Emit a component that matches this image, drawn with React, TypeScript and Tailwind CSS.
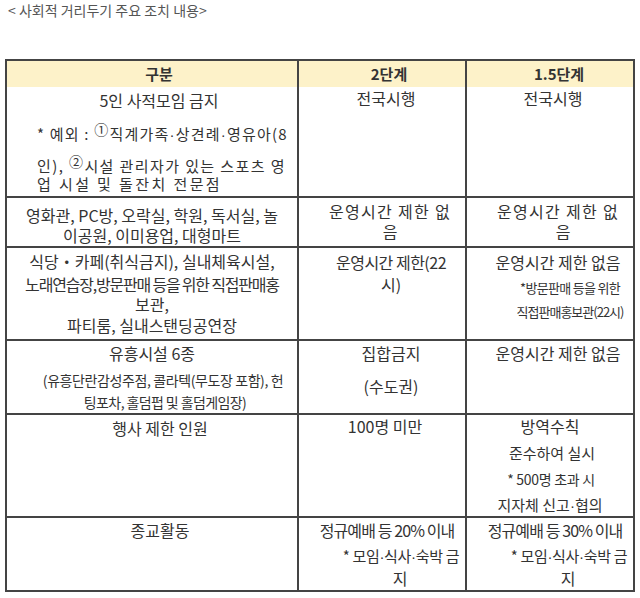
import type { ReactNode } from "react"

// one centred line of a cell; c holds height / size / offset classes
function L({ c, children }: { c: string; children: ReactNode }) {
  return <div className={`whitespace-nowrap text-center ${c}`}>{children}</div>
}

function Circ({ children }: { children: ReactNode }) {
  return <span className="relative -top-[5px] text-[14px]">{children}</span>
}

// narrow middle dot (the CJK one is full width)
function D() {
  return <span className="font-['Liberation_Sans',sans-serif]">·</span>
}

export default function App() {
  return (
    <div className="h-[598px] w-[640px] overflow-hidden bg-white font-['Noto_Sans_CJK_KR',sans-serif] text-[#333]">
      <div className="h-[20px] pl-[8px] text-[14px] leading-[20px] text-[#555]">
        &lt; 사회적 거리두기 주요 조치 내용&gt;
      </div>

      <div className="ml-[5px] mt-[39px] w-[630px] border-2 border-[#444]">
        {/* header */}
        <div className="grid h-[26px] grid-cols-[290px_168px_168px] bg-[#fdf2c9] text-[15px] font-bold leading-[26px]">
          <L c="pl-[14px]">구분</L>
          <div className="border-l-2 border-[#444]">
            <L c="pl-[14px]">2단계</L>
          </div>
          <div className="border-l-2 border-[#444]">
            <L c="pl-[18px]">1.5단계</L>
          </div>
        </div>

        {/* 5인 사적모임 금지 */}
        <div className="grid h-[109px] grid-cols-[290px_168px_168px]">
          <div>
            <L c="h-[26px] text-[16px] leading-[26px] pl-[14px]">5인 사적모임 금지</L>
            <div className="h-[42px] whitespace-nowrap pl-[30px] text-[15px] leading-[42px] tracking-[1.2px]">
              * 예외 : <Circ>①</Circ>직계가족<D />상견례<D />영유아(8
            </div>
            <div className="h-[22px] whitespace-nowrap pl-[30px] text-[15px] leading-[22px] tracking-[1.4px]">
              인), <Circ>②</Circ>시설 관리자가 있는 스포츠 영
            </div>
            <div className="h-[14px] whitespace-nowrap pl-[30px] text-[15px] leading-[14px] tracking-[2.4px]">
              업 시설 및 돌잔치 전문점
            </div>
          </div>
          <div className="border-l-2 border-[#444]">
            <L c="h-[23px] text-[16px] leading-[23px] pl-[8px]">전국시행</L>
          </div>
          <div className="border-l-2 border-[#444]">
            <L c="h-[23px] text-[16px] leading-[23px] pl-[6px]">전국시행</L>
          </div>
        </div>

        {/* 영화관 등 */}
        <div className="grid h-[50px] grid-cols-[290px_168px_168px] border-t-2 border-[#444] text-[16px]">
          <div className="pt-[7px]">
            <L c="h-[20px] leading-[20px]">영화관, PC방, 오락실, 학원, 독서실, 놀</L>
            <L c="h-[20px] leading-[20px]">이공원, 이미용업, 대형마트</L>
          </div>
          <div className="border-l-2 border-[#444] pt-[3px]">
            <L c="h-[20px] leading-[20px] pl-[16px] tracking-[1.3px]">운영시간 제한 없</L>
            <L c="h-[20px] leading-[20px] pl-[16px]">음</L>
          </div>
          <div className="border-l-2 border-[#444] pt-[3px]">
            <L c="h-[20px] leading-[20px] pl-[16px] tracking-[1.3px]">운영시간 제한 없</L>
            <L c="h-[20px] leading-[20px] pl-[26px]">음</L>
          </div>
        </div>

        {/* 식당·카페 등 */}
        <div className="grid h-[93px] grid-cols-[290px_168px_168px] border-t-2 border-[#444] text-[16px]">
          <div className="pt-[1px]">
            <L c="h-[24px] leading-[24px]">식당・카페(취식금지), 실내체육시설,</L>
            <L c="h-[22px] leading-[22px] tracking-[-1.2px]">노래연습장,방문판매 등을 위한 직접판매홍</L>
            <L c="h-[18px] leading-[18px]">보관,</L>
            <L c="h-[24px] leading-[24px]">파티룸, 실내스탠딩공연장</L>
          </div>
          <div className="border-l-2 border-[#444] pt-[3px]">
            <L c="h-[22px] leading-[22px] pl-[18px] tracking-[-0.5px]">운영시간 제한(22</L>
            <L c="h-[22px] leading-[22px] pl-[18px]">시)</L>
          </div>
          <div className="border-l-2 border-[#444] pt-[3px]">
            <L c="h-[22px] leading-[22px] pl-[16px]">운영시간 제한 없음</L>
            <L c="h-[30px] text-[13px] leading-[30px] pl-[40px] tracking-[-0.7px]">*방문판매 등을 위한</L>
            <L c="h-[18px] text-[13px] leading-[18px] pl-[40px] tracking-[-1px]">직접판매홍보관(22시)</L>
          </div>
        </div>

        {/* 유흥시설 */}
        <div className="grid h-[74px] grid-cols-[290px_168px_168px] border-t-2 border-[#444] text-[16px]">
          <div className="pt-[1px]">
            <L c="h-[22px] leading-[22px]">유흥시설 6종</L>
            <L c="h-[32px] text-[14px] leading-[32px] pl-[22px] tracking-[-0.4px]">
              (유흥단란감성주점, 콜라텍(무도장 포함), 헌
            </L>
            <L c="h-[12px] text-[14px] leading-[12px] pl-[26px] tracking-[-0.6px]">
              팅포차, 홀덤펍 및 홀덤게임장)
            </L>
          </div>
          <div className="border-l-2 border-[#444] pt-[1px]">
            <L c="h-[22px] leading-[22px] pl-[18px]">집합금지</L>
            <L c="h-[44px] leading-[44px] pl-[18px]">(수도권)</L>
          </div>
          <div className="border-l-2 border-[#444] pt-[1px]">
            <L c="h-[22px] leading-[22px] pl-[16px]">운영시간 제한 없음</L>
          </div>
        </div>

        {/* 행사 */}
        <div className="grid h-[103px] grid-cols-[290px_168px_168px] border-t-2 border-[#444] text-[16px]">
          <div className="pt-[2px]">
            <L c="h-[22px] leading-[22px] pl-[16px]">행사 제한 인원</L>
          </div>
          <div className="border-l-2 border-[#444]">
            <L c="h-[22px] leading-[22px] pl-[6px]">100명 미만</L>
          </div>
          <div className="border-l-2 border-[#444]">
            <L c="h-[22px] leading-[22px]">방역수칙</L>
            <L c="h-[32px] text-[15px] leading-[32px] pl-[4px]">준수하여 실시</L>
            <L c="h-[20px] text-[14px] leading-[20px] pl-[2px] tracking-[-0.3px]">* 500명 초과 시</L>
            <L c="h-[32px] text-[15px] leading-[32px]">
              지자체 신고<D />협의
            </L>
          </div>
        </div>

        {/* 종교활동 */}
        <div className="grid h-[74px] grid-cols-[290px_168px_168px] border-t-2 border-[#444] text-[16px]">
          <div className="pt-[1px]">
            <L c="h-[22px] leading-[22px] pl-[16px]">종교활동</L>
          </div>
          <div className="border-l-2 border-[#444] pt-[1px]">
            <L c="h-[22px] leading-[22px] pl-[10px] tracking-[-0.9px]">정규예배 등 20% 이내</L>
            <L c="h-[30px] text-[15px] leading-[30px] pl-[38px] tracking-[-0.3px]">
              * 모임<D />식사<D />숙박 금
            </L>
            <L c="h-[14px] leading-[14px] pl-[36px]">지</L>
          </div>
          <div className="border-l-2 border-[#444] pt-[1px]">
            <L c="h-[22px] leading-[22px] pl-[10px] tracking-[-0.9px]">정규예배 등 30% 이내</L>
            <L c="h-[30px] text-[15px] leading-[30px] pl-[38px] tracking-[-0.3px]">
              * 모임<D />식사<D />숙박 금
            </L>
            <L c="h-[14px] leading-[14px] pl-[36px]">지</L>
          </div>
        </div>
      </div>
    </div>
  )
}
